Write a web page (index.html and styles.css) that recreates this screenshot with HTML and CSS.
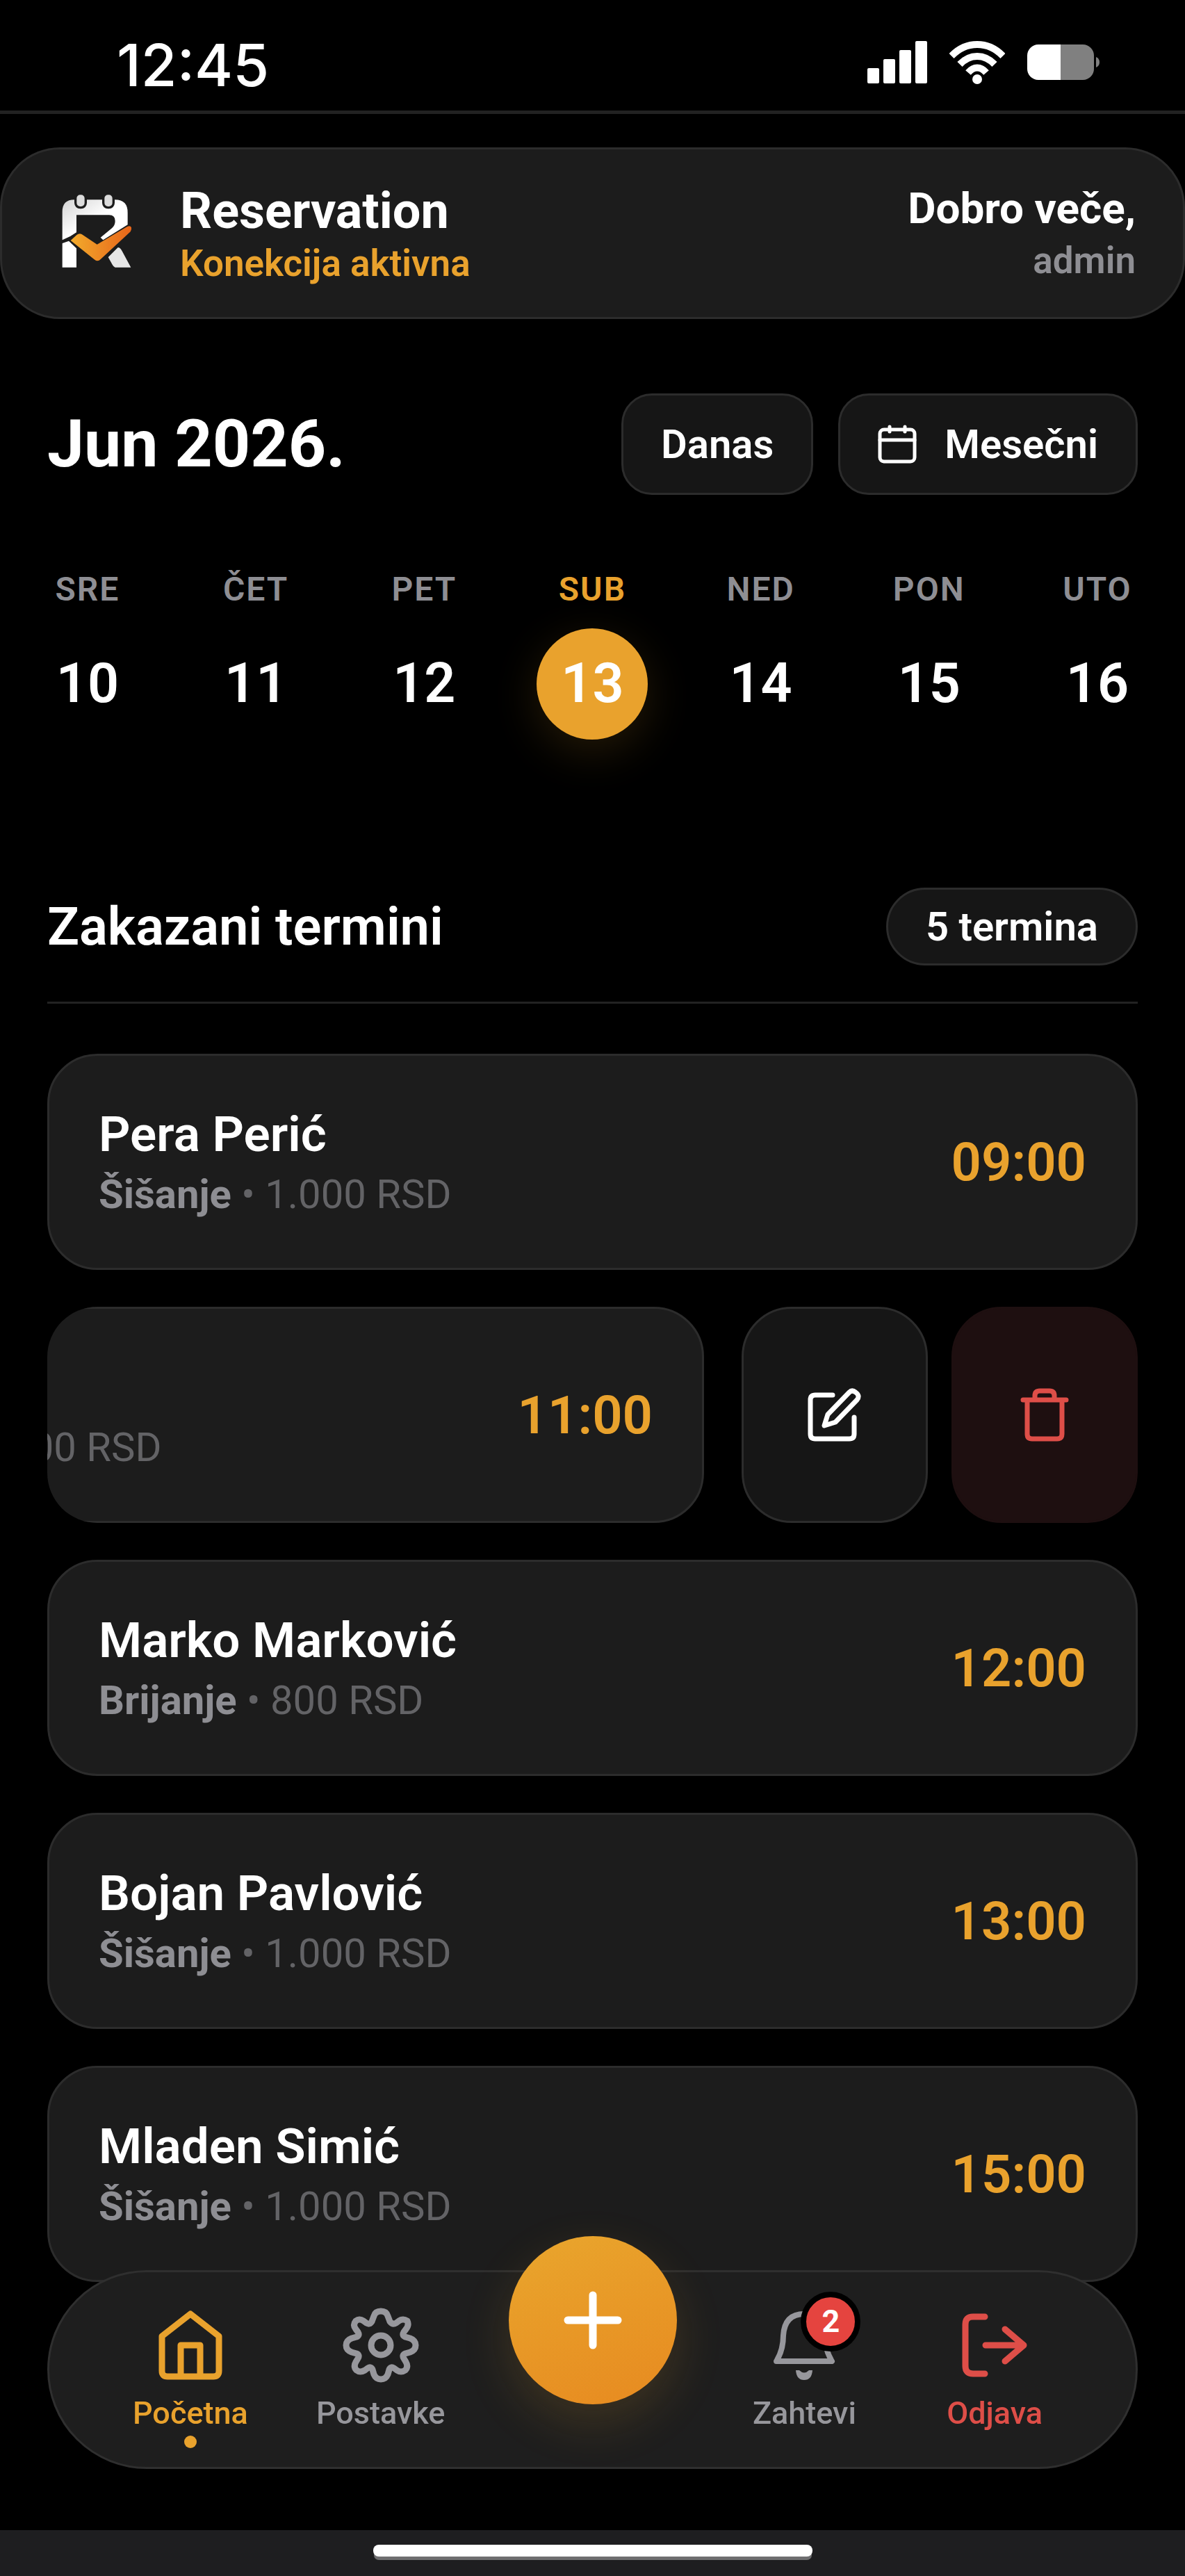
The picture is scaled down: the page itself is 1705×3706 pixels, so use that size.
FILE: index.html
```html
<!DOCTYPE html>
<html lang="sr-Latn">
<head>
    <meta charset="UTF-8">
    <meta name="viewport" content="width=device-width, initial-scale=1.0">
    <title>Reservation</title>
    <link rel="stylesheet" href="styles.css">
</head>
<body>
    <!-- Statusna traka -->
    <div class="status-bar">
        <span class="status-time">12:45</span>
        <div class="status-icons">
            <svg class="signal" viewBox="0 0 86 61" fill="#fff">
                <rect x="0" y="39" width="17" height="22" rx="2"/>
                <rect x="23" y="26" width="17" height="35" rx="2"/>
                <rect x="46" y="13" width="17" height="48" rx="2"/>
                <rect x="69" y="0" width="17" height="61" rx="2"/>
            </svg>
            <svg class="wifi" viewBox="0 0 80 62" fill="none" stroke="#fff" stroke-width="10">
                <path d="M3 21.500Q19 5 40 5T77 21.500"/>
                <path d="M15 33.500Q26 22 40 22T65 33.500"/>
                <path d="M27 45.500Q33 38.500 40 38.500T53 45.500"/>
                <circle cx="40" cy="55" r="7" fill="#fff" stroke="none"/>
            </svg>
            <svg class="battery" viewBox="0 0 105 51">
                <path d="M48 0H80a16 16 0 0 1 16 16V35a16 16 0 0 1-16 16H48z" fill="#808080"/>
                <path d="M48 0H16A16 16 0 0 0 0 16V35a16 16 0 0 0 16 16H48z" fill="#fff"/>
                <path d="M99 18q5 2 5 7.500t-5 7.500z" fill="#808080"/>
            </svg>
        </div>
    </div>

    <header class="header">
        <div class="brand">
            <svg class="logo" viewBox="0 16 420 420">
                <defs>
                    <linearGradient id="logo-white" x1="0" y1="0" x2="1" y2="1">
                        <stop offset="0" stop-color="#d4d4d4"/>
                        <stop offset="0.5" stop-color="#ffffff"/>
                    </linearGradient>
                    <linearGradient id="logo-orange" x1="0" y1="0" x2="1" y2="0">
                        <stop offset="0" stop-color="#f2ab2c"/>
                        <stop offset="1" stop-color="#e8651a"/>
                    </linearGradient>
                </defs>
                <path d="M56 254V132Q56 80 108 80H284Q338 80 338 136V188L232 254L221 243L270 203Q284 190 284 172Q284 146 258 146H117V221L90 238Z" fill="url(#logo-white)"/>
                <path d="M56 268L84 258L117 290V372H56Z" fill="#fff"/>
                <path d="M254 328L296 286Q306 286 314 302L352 372H284Q276 368 272 360Z" fill="#e6e6e6"/>
                <path d="M92 256L118 232Q128 224 140 229L206 273L336 196Q350 190 354 200Q356 208 350 218L222 336Q208 350 194 338Z" fill="url(#logo-orange)"/>
                <g fill="#dcdcdc" stroke="#1c1c1c" stroke-width="10">
                    <rect x="113" y="54" width="44" height="60" rx="20"/>
                    <rect x="233" y="54" width="44" height="60" rx="20"/>
                </g>
            </svg>
            <div>
                <h1 class="brand-name">Reservation</h1>
                <p class="brand-status">Konekcija aktivna</p>
            </div>
        </div>
        <div class="greeting">
            <p class="greeting-text">Dobro veče,</p>
            <p class="greeting-user">admin</p>
        </div>
    </header>

    <main class="content">
        <div class="date-bar">
            <h2 class="month">Jun 2026.</h2>
            <div class="date-buttons">
                <button class="button" type="button">Danas</button>
                <button class="button" type="button">
                    <svg class="button-icon" viewBox="0 0 56 56" fill="none" stroke="currentColor" stroke-width="5" stroke-linecap="round" stroke-linejoin="round">
                        <rect x="3" y="7" width="50" height="46" rx="6"/>
                        <path d="M3 22H53M17 3V10M39 3V10"/>
                    </svg>
                    Mesečni
                </button>
            </div>
        </div>

        <!-- Dani u nedelji -->
        <div class="days">
            <button class="day" type="button"><span class="day-name">SRE</span><span class="day-number">10</span></button>
            <button class="day" type="button"><span class="day-name">ČET</span><span class="day-number">11</span></button>
            <button class="day" type="button"><span class="day-name">PET</span><span class="day-number">12</span></button>
            <button class="day active" type="button"><span class="day-name">SUB</span><span class="day-number">13</span></button>
            <button class="day" type="button"><span class="day-name">NED</span><span class="day-number">14</span></button>
            <button class="day" type="button"><span class="day-name">PON</span><span class="day-number">15</span></button>
            <button class="day" type="button"><span class="day-name">UTO</span><span class="day-number">16</span></button>
        </div>

        <div class="section-head">
            <h2 class="section-title">Zakazani termini</h2>
            <span class="count">5 termina</span>
        </div>

        <!-- Lista termina -->
        <ul class="appointments">
            <li class="row">
                <div class="card">
                    <div>
                        <h3 class="client">Pera Perić</h3>
                        <p class="service"><strong>Šišanje</strong> • 1.000 RSD</p>
                    </div>
                    <time class="time">09:00</time>
                </div>
            </li>
            <!-- Red pomeren ulevo, vide se akcije -->
            <li class="row swiped">
                <div class="card">
                    <div>
                        <h3 class="client">Nikola Nikolić</h3>
                        <p class="service"><strong>Šišanje i pranje</strong> • 1.500 RSD</p>
                    </div>
                    <time class="time">11:00</time>
                </div>
                <div class="actions">
                    <button class="action" type="button" aria-label="Izmeni">
                        <svg class="action-icon" viewBox="0 0 80 80" fill="none" stroke="currentColor" stroke-width="7" stroke-linecap="round" stroke-linejoin="round">
                            <path d="M37 11H12Q5 11 5 18V67Q5 74 12 74H61Q68 74 68 67V43"/>
                            <path d="M61 7Q65 3 70 7Q77 12 72 18L41 50L25 55L30 39Z"/>
                        </svg>
                    </button>
                    <button class="action danger" type="button" aria-label="Obriši">
                        <svg class="action-icon" viewBox="0 0 80 80" fill="none" stroke="currentColor" stroke-width="7" stroke-linecap="round" stroke-linejoin="round">
                            <path d="M9 18H71M15 18V67Q15 74 22 74H58Q65 74 65 67V18M26 18V12Q26 5 33 5H47Q54 5 54 12V18"/>
                        </svg>
                    </button>
                </div>
            </li>
            <li class="row">
                <div class="card">
                    <div>
                        <h3 class="client">Marko Marković</h3>
                        <p class="service"><strong>Brijanje</strong> • 800 RSD</p>
                    </div>
                    <time class="time">12:00</time>
                </div>
            </li>
            <li class="row">
                <div class="card">
                    <div>
                        <h3 class="client">Bojan Pavlović</h3>
                        <p class="service"><strong>Šišanje</strong> • 1.000 RSD</p>
                    </div>
                    <time class="time">13:00</time>
                </div>
            </li>
            <li class="row">
                <div class="card">
                    <div>
                        <h3 class="client">Mladen Simić</h3>
                        <p class="service"><strong>Šišanje</strong> • 1.000 RSD</p>
                    </div>
                    <time class="time">15:00</time>
                </div>
            </li>
        </ul>
    </main>

    <!-- Donja navigacija -->
    <nav class="nav">
        <a class="nav-item active" href="#">
            <svg class="nav-icon" viewBox="0 0 110 110" fill="none" stroke="currentColor" stroke-width="9" stroke-linejoin="round">
                <path d="M14 42L55 10L96 42V92Q96 100 88 100H22Q14 100 14 92Z"/>
                <path d="M41 100V55H69V100"/>
            </svg>
            Početna
        </a>
        <a class="nav-item" href="#">
            <svg class="nav-icon" viewBox="0 0 110 110" fill="none" stroke="currentColor" stroke-width="9" stroke-linejoin="round">
                <circle cx="55" cy="55" r="14"/>
                <path d="M45 13Q47 6 55 6T65 13L68 21Q72 26 77 23L81 20Q87 16 93 20Q96 26 91 32L88 36Q85 41 90 43L97 45Q105 48 105 55T97 65L90 67Q85 69 88 74L91 79Q95 86 90 91Q84 95 78 91L74 88Q69 85 67 90L65 97Q62 104 55 104T45 97L43 90Q41 85 36 88L32 91Q25 95 20 91Q15 86 19 79L22 74Q25 69 20 67L13 65Q5 62 5 55T13 45L20 43Q25 41 22 36L19 32Q14 26 19 20Q24 16 30 20L34 23Q39 26 42 21Z"/>
            </svg>
            Postavke
        </a>
        <button class="add-button" type="button" aria-label="Novi termin">
            <svg class="add-icon" viewBox="0 0 84 84" fill="none" stroke="currentColor" stroke-width="11" stroke-linecap="round">
                <path d="M42 6V78M6 42H78"/>
            </svg>
        </button>
        <a class="nav-item" href="#">
            <span class="bell">
                <svg class="nav-icon" viewBox="0 0 110 110" fill="none" stroke="currentColor" stroke-width="8" stroke-linejoin="round">
                    <path d="M15 78Q25 62 25 41Q27 10 55 10Q83 10 85 41Q85 62 95 78Z"/>
                    <path d="M43 91H48Q55 98 62 91H67Q66 105 55 105T43 91Z" fill="currentColor" stroke="none"/>
                </svg>
                <span class="badge">2</span>
            </span>
            Zahtevi
        </a>
        <a class="nav-item logout" href="#">
            <svg class="nav-icon" viewBox="0 0 110 110" fill="none" stroke="currentColor" stroke-width="9" stroke-linecap="round" stroke-linejoin="round">
                <path d="M41 14H24Q13 14 13 25V85Q13 96 24 96H41"/>
                <path d="M42 55H96M70 32L97 55L70 78"/>
            </svg>
            Odjava
        </a>
    </nav>

    <div class="home-bar"><div class="home-indicator"></div></div>
</body>
</html>
```

FILE: styles.css
```css
* {
    box-sizing: border-box;
}
body {
    margin: 0;
    min-height: 100vh;
    display: flex;
    flex-direction: column;
    background-color: #000;
    color: #fff;
    font-family: Roboto, sans-serif;
}
h1, h2, h3, p, ul {
    margin: 0;
    padding: 0;
}
button {
    font-family: inherit;
    color: inherit;
    cursor: pointer;
}
svg {
    display: block;
    flex-shrink: 0;
}

/* Statusna traka */
.status-bar {
    display: flex;
    justify-content: space-between;
    align-items: center;
    height: 164px;
    padding: 28px 122px 0 168px;
    border-bottom: 5px solid #222;
}
.status-time {
    font-family: Inter, sans-serif;
    font-size: 84px;
    font-weight: 500;
    line-height: 96px;
}
.status-icons {
    display: flex;
    align-items: center;
    gap: 32px;
    height: 96px;
    padding-bottom: 8px;
}
.signal {
    width: 86px;
    height: 61px;
}
.wifi {
    width: 80px;
    height: 62px;
}
.battery {
    width: 105px;
    height: 51px;
}

/* Zaglavlje */
.header {
    display: flex;
    justify-content: space-between;
    align-items: center;
    margin-top: 48px;
    min-height: 247px;
    padding: 0 68px;
    background-color: #1c1c1c;
    border: 3px solid #2c2c2c;
    border-radius: 86px;
}
.brand {
    display: flex;
    align-items: center;
    gap: 48px;
}
.logo {
    width: 140px;
    height: 140px;
}
.brand-name {
    font-size: 72px;
    font-weight: 700;
    line-height: 86px;
}
.brand-status {
    font-size: 53px;
    font-weight: 600;
    line-height: 64px;
    color: #e9a22d;
}
.greeting {
    text-align: right;
}
.greeting-text {
    font-size: 62px;
    font-weight: 700;
    line-height: 78px;
}
.greeting-user {
    font-size: 53px;
    font-weight: 600;
    line-height: 72px;
    color: #8e8e93;
}

.content {
    flex: 1;
    padding: 107px 68px 0;
}

/* Mesec i dugmad */
.date-bar {
    display: flex;
    justify-content: space-between;
    align-items: center;
}
.month {
    font-size: 95px;
    font-weight: 700;
    line-height: 120px;
}
.date-buttons {
    display: flex;
    gap: 36px;
}
.button {
    display: flex;
    align-items: center;
    gap: 40px;
    height: 146px;
    padding: 0 54px;
    background-color: #161616;
    border: 3px solid #2c2c2c;
    border-radius: 44px;
    font-size: 58px;
    font-weight: 600;
}
.button-icon {
    width: 56px;
    height: 56px;
}

/* Dani */
.days {
    display: flex;
    justify-content: space-between;
    margin: 108px -22px 0;
}
.day {
    display: flex;
    flex-direction: column;
    align-items: center;
    gap: 28px;
    padding: 0;
    background: none;
    border: none;
}
.day-name {
    font-size: 48px;
    font-weight: 600;
    line-height: 56px;
    letter-spacing: 2px;
    color: #8e8e93;
}
.day-number {
    width: 160px;
    height: 160px;
    border-radius: 50%;
    font-size: 79px;
    font-weight: 600;
    line-height: 158px;
}
.day.active .day-name {
    color: #e9a22d;
}
.day.active .day-number {
    background-color: #e9a22d;
    box-shadow: 0 17px 64px rgba(233, 162, 45, 0.16);
}

/* Naslov liste */
.section-head {
    display: flex;
    justify-content: space-between;
    align-items: center;
    margin-top: 213px;
    padding-bottom: 52px;
    border-bottom: 3px solid #222;
}
.section-title {
    font-size: 76px;
    font-weight: 600;
    line-height: 88px;
}
.count {
    padding: 0 54px;
    background-color: #161616;
    border: 3px solid #2c2c2c;
    border-radius: 56px;
    font-size: 58px;
    font-weight: 600;
    line-height: 106px;
}

/* Termini */
.appointments {
    display: flex;
    flex-direction: column;
    gap: 53px;
    margin-top: 72px;
    list-style: none;
}
.row {
    display: flex;
}
.row.swiped {
    justify-content: flex-end;
    gap: 54px;
    overflow: hidden;
    border-radius: 72px;
}
.card {
    display: flex;
    flex: none;
    justify-content: space-between;
    align-items: center;
    width: 100%;
    padding: 66px 71px;
    background-color: #1c1c1c;
    border: 3px solid #2c2c2c;
    border-radius: 72px;
}
.client {
    font-size: 71px;
    font-weight: 600;
    line-height: 93px;
}
.service {
    font-size: 58px;
    line-height: 80px;
    color: #636366;
}
.service strong {
    font-weight: 700;
    color: #8e8e93;
}
.time {
    font-size: 76px;
    font-weight: 600;
    line-height: 88px;
    color: #e9a22d;
}
.actions {
    display: flex;
    flex: none;
    gap: 34px;
}
.action {
    display: flex;
    justify-content: center;
    align-items: center;
    width: 268px;
    background-color: #161616;
    border: 3px solid #2c2c2c;
    border-radius: 72px;
}
.action.danger {
    background-color: #1e0f10;
    border-color: #1e0f10;
    color: #de4e48;
}
.action-icon {
    width: 80px;
    height: 80px;
}

/* Navigacija */
.nav {
    position: fixed;
    left: 68px;
    right: 68px;
    bottom: 154px;
    display: flex;
    align-items: center;
    height: 286px;
    padding: 0 66px;
    background-color: #1e1e1e;
    border: 3px solid #2f2f2f;
    border-radius: 143px;
}
.nav-item {
    display: flex;
    flex: 1;
    flex-direction: column;
    align-items: center;
    gap: 15px;
    font-size: 45px;
    font-weight: 500;
    line-height: 56px;
    color: #97979c;
    text-decoration: none;
}
.nav-item.active {
    position: relative;
    color: #e9a22d;
}
.nav-item.active::after {
    content: "";
    position: absolute;
    top: 100%;
    width: 18px;
    height: 18px;
    margin-top: 4px;
    border-radius: 50%;
    background-color: #e9a22d;
}
.nav-item.logout {
    color: #de4e48;
}
.nav-icon {
    width: 110px;
    height: 110px;
}
.bell {
    position: relative;
}
.badge {
    position: absolute;
    top: -22px;
    left: 50px;
    width: 86px;
    height: 86px;
    border: 8px solid #000;
    border-radius: 50%;
    background-color: #e5443f;
    color: #fff;
    font-size: 45px;
    font-weight: 700;
    line-height: 70px;
    text-align: center;
}
.add-button {
    display: flex;
    justify-content: center;
    align-items: center;
    width: 242px;
    height: 242px;
    margin: 0 47px 142px;
    padding: 0;
    border: none;
    border-radius: 50%;
    background: linear-gradient(160deg, #e9a62d, #e78a20);
    box-shadow: 0 26px 70px rgba(233, 162, 45, 0.16);
}
.add-icon {
    width: 84px;
    height: 84px;
}

.home-bar {
    display: flex;
    justify-content: center;
    height: 66px;
    padding-top: 21px;
    background-color: #1e1e20;
}
.home-indicator {
    width: 632px;
    height: 17px;
    border-radius: 8px;
    background-color: #fff;
    box-shadow: 0 6px 0 -1px #6e6e70;
}
```
